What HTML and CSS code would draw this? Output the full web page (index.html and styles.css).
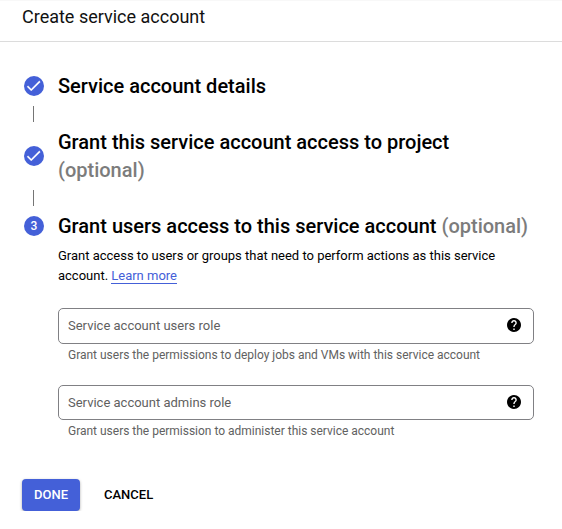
FILE: index.html
```html
<!DOCTYPE html>
<html lang="en">
<head>
<meta charset="utf-8">
<title>Create service account</title>
<link rel="stylesheet" href="styles.css">
</head>
<body>
<header class="header"><h1>Create service account</h1></header>
<main>
  <section class="step">
    <span class="badge"><svg viewBox="0 0 20 20"><path transform="translate(.4 .6) scale(.76)" d="M9 16.17L4.83 12l-1.42 1.41L9 19 21 7l-1.41-1.41z"/></svg></span>
    <h2>Service account details</h2>
  </section>
  <div class="line"></div>
  <section class="step">
    <span class="badge"><svg viewBox="0 0 20 20"><path transform="translate(.4 .6) scale(.76)" d="M9 16.17L4.83 12l-1.42 1.41L9 19 21 7l-1.41-1.41z"/></svg></span>
    <h2>Grant this service account access to project<br><span class="optional">(optional)</span></h2>
  </section>
  <div class="line"></div>
  <section class="step">
    <span class="badge">3</span>
    <h2>Grant users access to this service account <span class="optional">(optional)</span></h2>
  </section>
  <div class="content">
    <p class="intro">Grant access to users or groups that need to perform actions as this service<br>account. <a href="#">Learn more</a></p>
    <div class="field"><span>Service account users role</span><svg class="help" viewBox="2 2 20 20"><path d="M12 2C6.48 2 2 6.48 2 12s4.48 10 10 10 10-4.48 10-10S17.52 2 12 2zm1 17h-2v-2h2v2zm2.07-7.75l-.9.92C13.45 12.9 13 13.5 13 15h-2v-.5c0-1.1.45-2.1 1.17-2.83l1.24-1.26c.37-.36.59-.86.59-1.41 0-1.1-.9-2-2-2s-2 .9-2 2H8c0-2.21 1.79-4 4-4s4 1.79 4 4c0 .88-.36 1.68-.93 2.25z"/></svg></div>
    <p class="hint">Grant users the permissions to deploy jobs and VMs with this service account</p>
    <div class="field second"><span>Service account admins role</span><svg class="help" viewBox="2 2 20 20"><path d="M12 2C6.48 2 2 6.48 2 12s4.48 10 10 10 10-4.48 10-10S17.52 2 12 2zm1 17h-2v-2h2v2zm2.07-7.75l-.9.92C13.45 12.9 13 13.5 13 15h-2v-.5c0-1.1.45-2.1 1.17-2.83l1.24-1.26c.37-.36.59-.86.59-1.41 0-1.1-.9-2-2-2s-2 .9-2 2H8c0-2.21 1.79-4 4-4s4 1.79 4 4c0 .88-.36 1.68-.93 2.25z"/></svg></div>
    <p class="hint">Grant users the permission to administer this service account</p>
  </div>
  <div class="actions"><button class="primary">DONE</button><button>CANCEL</button></div>
</main>
</body>
</html>
```
FILE: styles.css
```css
* { box-sizing: border-box; }
body { margin: 0; background: #fff; color: #000; font-family: Roboto, sans-serif; overflow: hidden; }
h1, h2, p { margin: 0; }
.header { height: 42px; padding: 5px 22px 0; border-bottom: 1px solid #dcdcdc; box-shadow: inset 0 1px #f8f8f8; }
h1 { font-size: 18px; line-height: 24px; font-weight: 400; color: #111; }
main { padding: 30px 22px 0; }
.step { display: flex; align-items: center; gap: 14px; padding-left: 2px; }
.badge { width: 20px; height: 20px; flex: none; border-radius: 50%; background: #4460d8; color: #fff; font-size: 12px; font-weight: 500; line-height: 20px; text-align: center; }
.badge svg { display: block; width: 20px; height: 20px; fill: #fff; stroke: #fff; stroke-width: .3; }
h2 { font-size: 20px; line-height: 28px; font-weight: 500; white-space: nowrap; }
.optional { color: #7c7c7c; }
.line { width: 1px; height: 16px; margin: 6px 0 6px 11px; background: #757575; }
.content { margin-left: 36px; width: 476px; }
.intro { margin-top: 6px; font-size: 13px; line-height: 20px; letter-spacing: -.008px; white-space: nowrap; }
.intro a { color: #4460d8; text-decoration: none; border-bottom: 1px solid #4460d8; }
.field { height: 36px; margin-top: 22px; padding: 0 12px 2px 9px; border: 1px solid #80868b; border-color: #808084; border-radius: 5px; display: flex; align-items: center; justify-content: space-between; font-size: 13px; color: #5f5f5f; }
.second { height: 35px; padding-bottom: 1px; }
.help { width: 14px; height: 14px; }
.hint { margin: 3px 0 0 10px; font-size: 12px; line-height: 16px; letter-spacing: -.01px; color: #616161; }
.actions { display: flex; gap: 12px; margin-top: 40px; }
button { height: 32px; padding: 0 12px 1px; border: 0; border-radius: 4px; background: none; color: #000; font: 500 13px Roboto, sans-serif; }
.primary { background: #4460d8; color: #fff; box-shadow: 0 1px 3px #0005; }
```
